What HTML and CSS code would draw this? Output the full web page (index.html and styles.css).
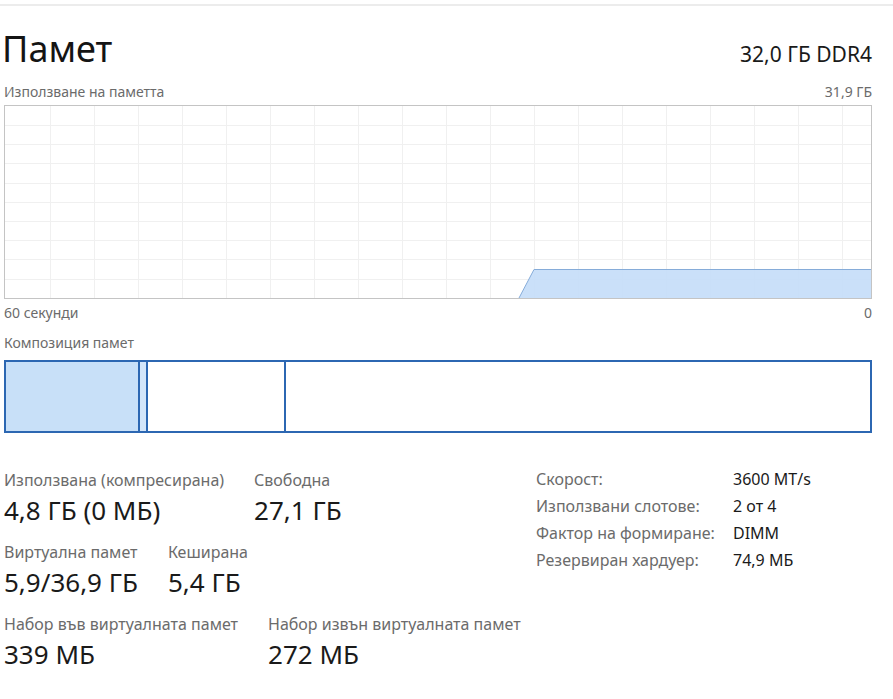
FILE: index.html
```html
<!DOCTYPE html>
<html lang="bg">
<head>
<meta charset="utf-8">
<title>Памет</title>
<link rel="stylesheet" href="styles.css">
</head>
<body>
<div class="topline"></div>
<main class="page">
  <header class="header">
    <h1 class="title">Памет</h1>
    <div class="spec">32,0 ГБ DDR4</div>
  </header>

  <div class="caption-row">
    <span>Използване на паметта</span>
    <span>31,9 ГБ</span>
  </div>

  <div class="graph">
    <svg class="graph-svg" width="866" height="192" viewBox="0 0 866 192" preserveAspectRatio="none">
      <g class="grid">
        <line x1="0" y1="19.5" x2="866" y2="19.5"/>
        <line x1="0" y1="38.5" x2="866" y2="38.5"/>
        <line x1="0" y1="57.5" x2="866" y2="57.5"/>
        <line x1="0" y1="77.5" x2="866" y2="77.5"/>
        <line x1="0" y1="96.5" x2="866" y2="96.5"/>
        <line x1="0" y1="115.5" x2="866" y2="115.5"/>
        <line x1="0" y1="134.5" x2="866" y2="134.5"/>
        <line x1="0" y1="153.5" x2="866" y2="153.5"/>
        <line x1="0" y1="173.5" x2="866" y2="173.5"/>
        <line x1="45.5" y1="0" x2="45.5" y2="192"/>
        <line x1="89.5" y1="0" x2="89.5" y2="192"/>
        <line x1="133.5" y1="0" x2="133.5" y2="192"/>
        <line x1="177.5" y1="0" x2="177.5" y2="192"/>
        <line x1="221.5" y1="0" x2="221.5" y2="192"/>
        <line x1="265.5" y1="0" x2="265.5" y2="192"/>
        <line x1="309.5" y1="0" x2="309.5" y2="192"/>
        <line x1="353.5" y1="0" x2="353.5" y2="192"/>
        <line x1="397.5" y1="0" x2="397.5" y2="192"/>
        <line x1="441.5" y1="0" x2="441.5" y2="192"/>
        <line x1="485.5" y1="0" x2="485.5" y2="192"/>
        <line x1="529.5" y1="0" x2="529.5" y2="192"/>
        <line x1="573.5" y1="0" x2="573.5" y2="192"/>
        <line x1="617.5" y1="0" x2="617.5" y2="192"/>
        <line x1="661.5" y1="0" x2="661.5" y2="192"/>
        <line x1="705.5" y1="0" x2="705.5" y2="192"/>
        <line x1="749.5" y1="0" x2="749.5" y2="192"/>
        <line x1="793.5" y1="0" x2="793.5" y2="192"/>
        <line x1="837.5" y1="0" x2="837.5" y2="192"/>
      </g>
      <polygon class="usage-fill" points="514,192 529,163.5 866,163.5 866,192"/>
      <polyline class="usage-line" points="514,192 529,163.5 866,163.5"/>
    </svg>
  </div>

  <div class="caption-row time-row">
    <span>60 секунди</span>
    <span>0</span>
  </div>

  <div class="caption comp-caption">Композиция памет</div>

  <div class="composition">
    <div class="seg seg-inuse"></div>
    <div class="seg seg-modified"></div>
    <div class="seg seg-standby"></div>
    <div class="seg seg-free"></div>
  </div>

  <section class="stats">
    <div class="stats-left">
      <div class="stat-row">
        <div class="stat">
          <div class="stat-label">Използвана (компресирана)</div>
          <div class="stat-value">4,8 ГБ (0 МБ)</div>
        </div>
        <div class="stat">
          <div class="stat-label">Свободна</div>
          <div class="stat-value">27,1 ГБ</div>
        </div>
      </div>
      <div class="stat-row">
        <div class="stat">
          <div class="stat-label">Виртуална памет</div>
          <div class="stat-value">5,9/36,9 ГБ</div>
        </div>
        <div class="stat">
          <div class="stat-label">Кеширана</div>
          <div class="stat-value">5,4 ГБ</div>
        </div>
      </div>
      <div class="stat-row">
        <div class="stat">
          <div class="stat-label">Набор във виртуалната памет</div>
          <div class="stat-value">339 МБ</div>
        </div>
        <div class="stat">
          <div class="stat-label">Набор извън виртуалната памет</div>
          <div class="stat-value">272 МБ</div>
        </div>
      </div>
    </div>

    <dl class="props">
      <dt>Скорост:</dt><dd>3600 MT/s</dd>
      <dt>Използвани слотове:</dt><dd>2 от 4</dd>
      <dt>Фактор на формиране:</dt><dd>DIMM</dd>
      <dt>Резервиран хардуер:</dt><dd>74,9 МБ</dd>
    </dl>
  </section>
</main>
</body>
</html>
```
FILE: styles.css
```css
* { box-sizing: border-box; }

html, body {
  margin: 0;
  padding: 0;
  background: #ffffff;
}

body {
  font-family: "Noto Sans", "Open Sans", sans-serif;
  color: #1a1a1a;
  width: 893px;
  height: 699px;
  overflow: hidden;
}

.topline {
  margin-top: 4px;
  height: 2px;
  background: #ececec;
}

.page {
  padding: 0 21px 0 4px;
}

.header {
  margin-top: 21px;
  display: flex;
  justify-content: space-between;
  align-items: baseline;
}

.title {
  margin: 0 0 0 -2px;
  font-size: 36px;
  font-weight: 400;
  line-height: 44px;
  color: #141414;
}

.spec {
  font-size: 21px;
  line-height: 28px;
  color: #1a1a1a;
}

.caption-row {
  margin-top: 12px;
  display: flex;
  justify-content: space-between;
  font-size: 14px;
  line-height: 18px;
  color: #6b6b6b;
}

.caption {
  font-size: 14px;
  line-height: 18px;
  color: #6b6b6b;
}

.graph {
  margin-top: 4px;
  height: 194px;
  border: 1px solid #c4c4c4;
  background: #ffffff;
}

.graph-svg {
  display: block;
}

.grid line {
  stroke: #f0f0f0;
  stroke-width: 1;
  shape-rendering: crispEdges;
}

.usage-fill {
  fill: #c5ddf8;
  fill-opacity: 0.92;
}

.usage-line {
  fill: none;
  stroke: #86acd9;
  stroke-width: 1;
}

.time-row {
  margin-top: 5px;
}

.comp-caption {
  margin-top: 12px;
}

.composition {
  margin-top: 8px;
  height: 73px;
  border: 2px solid #2c67b2;
  display: flex;
}

.seg {
  height: 100%;
  border-right: 2px solid #2c67b2;
}

.seg-inuse {
  width: 134px;
  background: #c8e0f8;
}

.seg-modified {
  width: 8px;
  background: #d3e6fa;
}

.seg-standby {
  width: 138px;
  background: #ffffff;
}

.seg-free {
  flex: 1;
  border-right: none;
  background: #ffffff;
}

.stats {
  margin-top: 33px;
  display: flex;
  align-items: flex-start;
}

.stats-left {
  width: 532px;
  padding-top: 4px;
}

.stat-row {
  display: flex;
  gap: 30px;
  margin-bottom: 16px;
}

.stat-label {
  font-size: 16px;
  line-height: 20px;
  color: #6b6b6b;
  white-space: nowrap;
}

.stat-value {
  margin-top: 4px;
  font-size: 26px;
  line-height: 32px;
  color: #1a1a1a;
  white-space: nowrap;
}

.props {
  margin: 0;
  display: grid;
  grid-template-columns: 197px auto;
  font-size: 16px;
  line-height: 27px;
}

.props dt {
  color: #6b6b6b;
  white-space: nowrap;
}

.props dd {
  margin: 0;
  color: #1a1a1a;
  white-space: nowrap;
}
```
